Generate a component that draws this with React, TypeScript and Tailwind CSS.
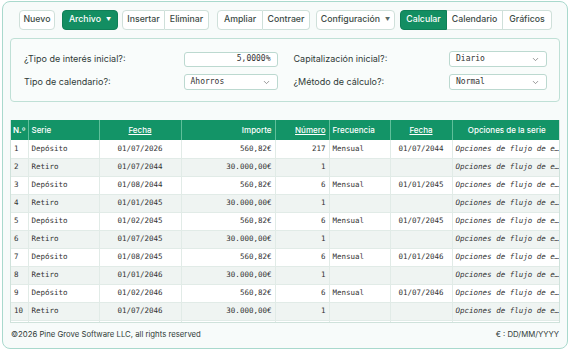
import { ChevronDown } from "lucide-react";

type Row = {
  n: number;
  serie: string;
  fecha: string;
  importe: string;
  numero: string;
  frecuencia: string;
  fecha2: string;
};

const rows: Row[] = [
  { n: 1, serie: "Depósito", fecha: "01/07/2026", importe: "560,82€", numero: "217", frecuencia: "Mensual", fecha2: "01/07/2044" },
  { n: 2, serie: "Retiro", fecha: "01/07/2044", importe: "30.000,00€", numero: "1", frecuencia: "", fecha2: "" },
  { n: 3, serie: "Depósito", fecha: "01/08/2044", importe: "560,82€", numero: "6", frecuencia: "Mensual", fecha2: "01/01/2045" },
  { n: 4, serie: "Retiro", fecha: "01/01/2045", importe: "30.000,00€", numero: "1", frecuencia: "", fecha2: "" },
  { n: 5, serie: "Depósito", fecha: "01/02/2045", importe: "560,82€", numero: "6", frecuencia: "Mensual", fecha2: "01/07/2045" },
  { n: 6, serie: "Retiro", fecha: "01/07/2045", importe: "30.000,00€", numero: "1", frecuencia: "", fecha2: "" },
  { n: 7, serie: "Depósito", fecha: "01/08/2045", importe: "560,82€", numero: "6", frecuencia: "Mensual", fecha2: "01/01/2046" },
  { n: 8, serie: "Retiro", fecha: "01/01/2046", importe: "30.000,00€", numero: "1", frecuencia: "", fecha2: "" },
  { n: 9, serie: "Depósito", fecha: "01/02/2046", importe: "560,82€", numero: "6", frecuencia: "Mensual", fecha2: "01/07/2046" },
  { n: 10, serie: "Retiro", fecha: "01/07/2046", importe: "30.000,00€", numero: "1", frecuencia: "", fecha2: "" },
];

const btn =
  "h-[20px] flex items-center justify-center text-[8.75px] font-medium text-[#3b4a45] bg-white border border-[#cfe0da]";
const btnGreen =
  "h-[20px] flex items-center justify-center text-[8.75px] font-medium text-white bg-[#138e62] border border-[#0f7f57]";

function Caret({ light }: { light?: boolean }) {
  return (
    <span className={`ml-[5px] text-[5px] ${light ? "text-white" : "text-[#5a6a65]"}`}>▼</span>
  );
}

function Select({ value, w }: { value: string; w: string }) {
  return (
    <div className={`h-[16px] ${w} flex items-center justify-between px-[6px] bg-white border border-[#bcd9d0] rounded-[3px]`}>
      <span className="text-[8px] text-[#333] font-['DejaVu_Sans_Mono',monospace]">{value}</span>
      <ChevronDown size={9} className="text-[#777]" />
    </div>
  );
}

const cell = "border-r border-[#e1ebe7]";

export default function App() {
  return (
    <div className="w-[570px] h-[351px] bg-white pt-[1px] pl-[2px] font-['Inter',sans-serif]">
      <div className="w-[566px] h-[348px] rounded-lg border border-[#a9d9cd] bg-[#f7fbfa] px-[7px] pt-[8px] flex flex-col">
        {/* toolbar */}
        <div className="flex items-center pl-[9px] h-[20px]">
          <button className={`${btn} w-[36px] rounded-[4px]`}>Nuevo</button>
          <button className={`${btnGreen} ml-[7px] w-[56px] rounded-[4px]`}>
            Archivo
            <Caret light />
          </button>
          <div className="ml-[4px] flex">
            <button className={`${btn} w-[43px] rounded-l-[4px]`}>Insertar</button>
            <button className={`${btn} w-[44px] rounded-r-[4px] border-l-0`}>Eliminar</button>
          </div>
          <div className="ml-[8px] flex">
            <button className={`${btn} w-[46px] rounded-l-[4px]`}>Ampliar</button>
            <button className={`${btn} w-[47px] rounded-r-[4px] border-l-0`}>Contraer</button>
          </div>
          <button className={`${btn} ml-[6px] w-[79px] rounded-[4px]`}>
            Configuración
            <Caret />
          </button>
          <div className="ml-[5px] flex">
            <button className={`${btnGreen} w-[47px] rounded-l-[4px]`}>Calcular</button>
            <button className={`${btn} w-[56px] border-l-0`}>Calendario</button>
            <button className={`${btn} w-[49px] rounded-r-[4px] border-l-0`}>Gráficos</button>
          </div>
        </div>

        {/* form panel */}
        <div className="mt-[8px] h-[64px] rounded-[4px] border border-[#bfe0d6] bg-[#f9fcfb] pl-[13px] pr-[12px] pt-[12px] grid grid-cols-2 content-start gap-x-[16px] gap-y-[7px] text-[9px] text-[#2f3a37]">
          <div className="h-[16px] flex items-center justify-between">
            <span>¿Tipo de interés inicial?:</span>
            <div className="h-[15px] w-[94px] flex items-center justify-end px-[6px] bg-white border border-[#bcd9d0] rounded-[3px] text-[8px] text-[#333] font-['DejaVu_Sans_Mono',monospace]">
              5,0000%
            </div>
          </div>
          <div className="h-[16px] flex items-center justify-between">
            <span>Capitalización inicial?:</span>
            <Select value="Diario" w="w-[98px]" />
          </div>
          <div className="h-[16px] flex items-center justify-between">
            <span>Tipo de calendario?:</span>
            <Select value="Ahorros" w="w-[94px]" />
          </div>
          <div className="h-[16px] flex items-center justify-between">
            <span>¿Método de cálculo?:</span>
            <Select value="Normal" w="w-[98px]" />
          </div>
        </div>

        {/* table */}
        <div className="mt-[18px] h-[203px] w-[550px] overflow-hidden border border-[#cfe2db] border-t-0">
          <table className="table-fixed w-[550px] border-collapse">
            <colgroup>
              <col className="w-[17px]" />
              <col className="w-[71px]" />
              <col className="w-[82px]" />
              <col className="w-[94px]" />
              <col className="w-[54px]" />
              <col className="w-[61px]" />
              <col className="w-[62px]" />
              <col className="w-[109px]" />
            </colgroup>
            <thead>
              <tr className="h-[20px] bg-[#139467] text-white text-[8px]">
                <th className="px-[2px] text-left border-r border-[#5fbf9a] font-semibold">N.º</th>
                <th className="px-[3px] text-left border-r border-[#5fbf9a] font-medium">Serie</th>
                <th className="px-[3px] text-center border-r border-[#5fbf9a] font-medium underline">Fecha</th>
                <th className="px-[3px] text-right border-r border-[#5fbf9a] font-medium">Importe</th>
                <th className="px-[3px] text-right border-r border-[#5fbf9a] font-medium underline">Número</th>
                <th className="px-[3px] text-left border-r border-[#5fbf9a] font-medium">Frecuencia</th>
                <th className="px-[3px] text-center border-r border-[#5fbf9a] font-medium underline">Fecha</th>
                <th className="px-[3px] text-center font-medium">Opciones de la serie</th>
              </tr>
            </thead>
            <tbody className="font-['DejaVu_Sans_Mono',monospace] text-[7.5px] text-[#333]">
              {rows.map((r) => (
                <tr
                  key={r.n}
                  className={`h-[18px] border-b border-[#e1ebe7] ${r.n % 2 === 0 ? "bg-[#eff4f2]" : "bg-white"}`}
                >
                  <td className={`pl-[3px] pr-[1px] text-left ${cell}`}>{r.n}</td>
                  <td className={`px-[3px] ${cell}`}>{r.serie}</td>
                  <td className={`px-[3px] text-center ${cell}`}>{r.fecha}</td>
                  <td className={`px-[3px] text-right ${cell}`}>{r.importe}</td>
                  <td className={`px-[3px] text-right ${cell}`}>{r.numero}</td>
                  <td className={`px-[3px] ${cell}`}>{r.frecuencia}</td>
                  <td className={`px-[3px] text-center ${cell}`}>{r.fecha2}</td>
                  <td className="pl-[3px] pr-[1px] italic truncate">Opciones de flujo de efectivo</td>
                </tr>
              ))}
              <tr className="h-[18px] bg-white">
                <td className={cell} />
                <td className={cell} />
                <td className={cell} />
                <td className={cell} />
                <td className={cell} />
                <td className={cell} />
                <td className={cell} />
                <td />
              </tr>
            </tbody>
          </table>
        </div>

        {/* footer */}
        <div className="flex-1 flex items-center justify-between px-[1px] pb-[1px] text-[7.75px] text-[#2f3a37]">
          <span>©2026 Pine Grove Software LLC, all rights reserved</span>
          <span>€ : DD/MM/YYYY</span>
        </div>
      </div>
    </div>
  );
}
